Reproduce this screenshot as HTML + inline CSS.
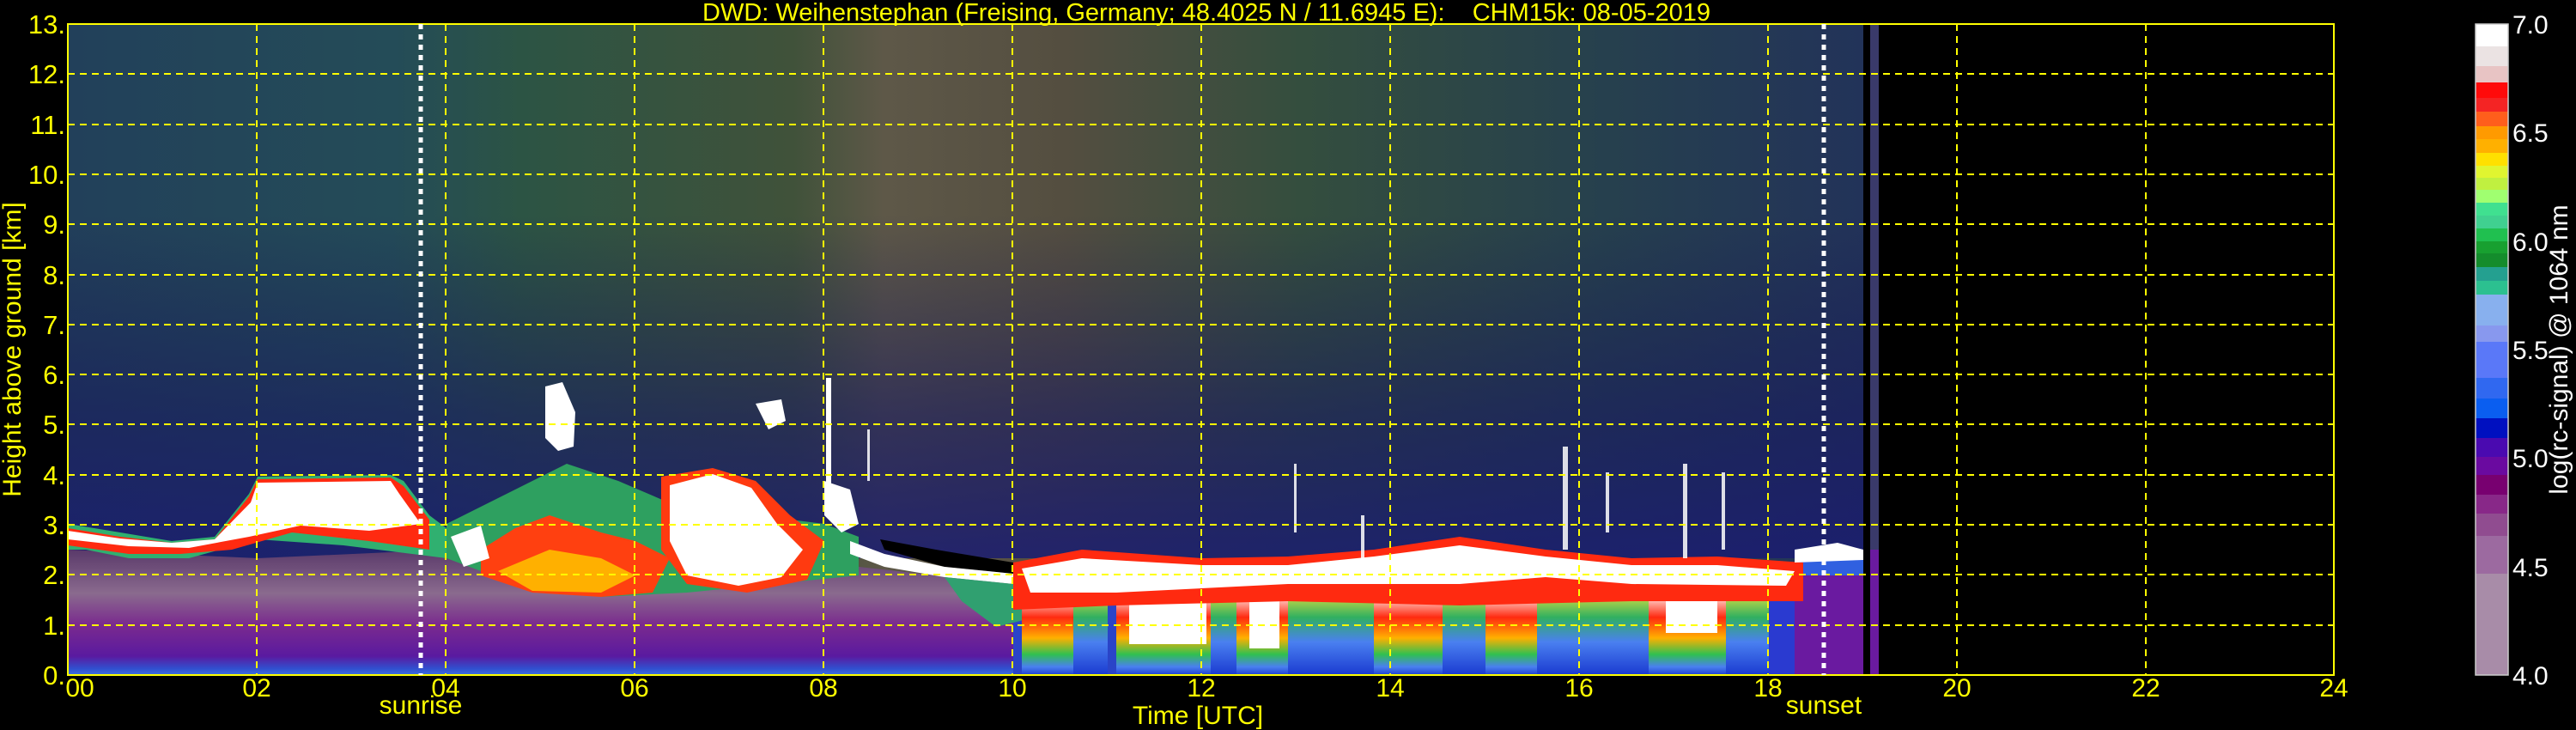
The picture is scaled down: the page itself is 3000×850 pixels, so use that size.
<!DOCTYPE html>
<html><head><meta charset="utf-8"><style>
html,body{margin:0;padding:0;background:#000;width:3000px;height:850px;overflow:hidden}
svg{display:block}
text{font-family:"Liberation Sans","DejaVu Sans",sans-serif}
</style></head><body>
<svg width="3000" height="850" viewBox="0 0 3000 850" xmlns="http://www.w3.org/2000/svg">
<defs>
<linearGradient id="hz" x1="79" x2="2190" y1="0" y2="0" gradientUnits="userSpaceOnUse">
<stop offset="0" stop-color="#22405a"/>
<stop offset="0.18" stop-color="#244c58"/>
<stop offset="0.25" stop-color="#2c5444"/>
<stop offset="0.4" stop-color="#40523a"/>
<stop offset="0.45" stop-color="#5e5848"/>
<stop offset="0.55" stop-color="#544e40"/>
<stop offset="0.68" stop-color="#344e3e"/>
<stop offset="0.85" stop-color="#26404e"/>
<stop offset="1" stop-color="#22325a"/>
</linearGradient>
<linearGradient id="vt" x1="0" x2="0" y1="250" y2="640" gradientUnits="userSpaceOnUse">
<stop offset="0" stop-color="#141450" stop-opacity="0"/>
<stop offset="0.6" stop-color="#181a60" stop-opacity="0.6"/>
<stop offset="1" stop-color="#1a1c70" stop-opacity="0.85"/>
</linearGradient>
<linearGradient id="low" x1="0" x2="0" y1="640" y2="786" gradientUnits="userSpaceOnUse">
<stop offset="0" stop-color="#5a3a6a"/>
<stop offset="0.35" stop-color="#8a6a8e"/>
<stop offset="0.6" stop-color="#7a2a8e"/>
<stop offset="0.85" stop-color="#5a1aa0"/>
<stop offset="0.95" stop-color="#3050d0"/>
<stop offset="1" stop-color="#4070e0"/>
</linearGradient>
<linearGradient id="col" x1="0" x2="0" y1="690" y2="786" gradientUnits="userSpaceOnUse">
<stop offset="0" stop-color="#ffffff"/>
<stop offset="0.3" stop-color="#ff2a10"/>
<stop offset="0.55" stop-color="#ffb000"/>
<stop offset="0.75" stop-color="#30c050"/>
<stop offset="0.9" stop-color="#4a80f0"/>
<stop offset="1" stop-color="#2040d0"/>
</linearGradient>
<linearGradient id="colb" x1="0" x2="0" y1="690" y2="786" gradientUnits="userSpaceOnUse">
<stop offset="0" stop-color="#e0e040"/>
<stop offset="0.3" stop-color="#30b060"/>
<stop offset="0.6" stop-color="#4a80f0"/>
<stop offset="1" stop-color="#1a3ad0"/>
</linearGradient>
</defs>

<rect x="79" y="28" width="2111" height="758" fill="url(#hz)"/>
<rect x="79" y="250" width="2111" height="400" fill="url(#vt)"/>

<polygon points="79,640 300,650 520,640 700,670 900,675 1000,660 1180,680 1180,786 79,786" fill="url(#low)"/>
<rect x="1180" y="700" width="1000" height="86" fill="#2a44c8"/>

<polygon points="79,610 140,620 200,630 250,625 290,575 300,555 455,553 470,560 500,600 520,615 520,650 480,645 400,635 300,628 220,650 150,650 100,640 79,640" fill="#30b070"/>
<polygon points="79,615 140,625 200,632 250,628 290,578 300,558 455,556 470,566 500,605 500,640 430,630 340,620 270,640 210,645 150,645 79,635" fill="#ff2a10"/>
<polygon points="79,618 140,627 200,632 250,628 292,585 300,562 455,560 465,575 490,610 430,618 350,612 290,625 220,638 150,636 79,628" fill="#ffffff"/>

<polygon points="520,610 560,590 620,560 660,540 720,560 790,590 880,600 960,610 1000,625 1000,670 900,680 800,690 700,695 600,680 520,650" fill="#2ea060"/>
<polygon points="560,640 600,615 640,600 700,620 740,630 780,650 760,690 700,695 620,690 560,670" fill="#ff4010"/>
<polygon points="580,665 640,640 700,650 740,670 700,690 620,688" fill="#ffb000"/>
<polygon points="770,555 830,545 880,560 920,600 960,630 940,675 870,690 800,680 770,640" fill="#ff3a10"/>
<polygon points="780,565 830,552 875,568 905,610 935,640 910,672 860,682 800,670 780,630" fill="#ffffff"/>
<polygon points="635,450 655,445 670,480 668,520 650,525 635,510" fill="#ffffff"/>
<polygon points="525,625 560,612 570,650 540,660" fill="#ffffff"/>
<polygon points="880,470 910,465 915,490 895,500" fill="#ffffff"/>
<rect x="962" y="440" width="6" height="140" fill="#ffffff"/>
<polygon points="960,560 990,570 1000,610 980,620 960,600" fill="#ffffff"/>

<polygon points="1025,628 1090,640 1180,655 1180,668 1100,660 1030,640" fill="#000"/>
<polygon points="990,630 1030,645 1100,660 1180,668 1180,680 1100,672 1030,660 990,645" fill="#ffffff"/>
<polygon points="1100,672 1180,680 1200,720 1160,730 1120,700" fill="#30a070"/>

<rect x="1190" y="690" width="60" height="96" fill="url(#col)"/>
<rect x="1250" y="690" width="40" height="96" fill="url(#colb)"/>
<rect x="1300" y="690" width="110" height="96" fill="url(#col)"/>
<rect x="1315" y="695" width="90" height="55" fill="#ffffff"/>
<rect x="1410" y="690" width="30" height="96" fill="url(#colb)"/>
<rect x="1440" y="690" width="60" height="96" fill="url(#col)"/>
<rect x="1455" y="695" width="35" height="60" fill="#ffffff"/>
<rect x="1500" y="690" width="100" height="96" fill="url(#colb)"/>
<rect x="1600" y="690" width="80" height="96" fill="url(#col)"/>
<rect x="1680" y="690" width="50" height="96" fill="url(#colb)"/>
<rect x="1730" y="690" width="60" height="96" fill="url(#col)"/>
<rect x="1790" y="690" width="40" height="96" fill="url(#colb)"/>
<rect x="1830" y="690" width="90" height="96" fill="url(#colb)"/>
<rect x="1920" y="690" width="90" height="96" fill="url(#col)"/>
<rect x="1940" y="692" width="60" height="45" fill="#ffffff"/>
<rect x="2010" y="690" width="50" height="96" fill="url(#colb)"/>
<rect x="2060" y="700" width="50" height="86" fill="#2a3ad0"/>
<rect x="2090" y="670" width="80" height="116" fill="#6a1aa0"/>
<rect x="2090" y="650" width="80" height="20" fill="#3060e0"/>

<polygon points="1180,655 1260,640 1400,650 1500,648 1600,640 1700,625 1800,640 1900,650 2000,648 2100,655 2100,700 1900,700 1700,705 1500,700 1300,705 1180,710" fill="#ff2a10"/>
<polygon points="1190,662 1260,650 1400,658 1500,658 1600,648 1700,635 1800,648 1900,658 2000,658 2090,665 2080,682 1900,680 1800,672 1700,680 1500,680 1300,690 1200,690" fill="#ffffff"/>
<polygon points="2090,640 2140,632 2170,640 2170,652 2090,655" fill="#ffffff"/>
<rect x="2178" y="640" width="10" height="146" fill="#6a1aa0"/>
<rect x="2178" y="28" width="10" height="612" fill="#3a3a6a"/>
<rect x="2170" y="28" width="8" height="758" fill="#000"/>
<g fill="#ffffff" opacity="0.85">
<rect x="1507" y="540" width="3" height="80"/><rect x="1585" y="600" width="4" height="60"/>
<rect x="1820" y="520" width="6" height="120"/><rect x="1960" y="540" width="5" height="110"/>
<rect x="1870" y="550" width="4" height="70"/><rect x="2005" y="550" width="4" height="90"/>
<rect x="1010" y="500" width="3" height="60"/>
</g>

<rect x="2188" y="28" width="531" height="758" fill="#000"/>

<g stroke="#ffff00" stroke-width="2" stroke-dasharray="8,6" fill="none">
<path d="M79 728H2718M79 669H2718M79 611H2718M79 553H2718M79 494H2718M79 436H2718M79 378H2718M79 320H2718M79 261H2718M79 203H2718M79 145H2718M79 86H2718"/>
<path d="M299 28V786M519 28V786M739 28V786M959 28V786M1179 28V786M1399 28V786M1619 28V786M1839 28V786M2059 28V786M2279 28V786M2499 28V786"/>
</g>
<rect x="79" y="28" width="2639" height="758" fill="none" stroke="#ffff00" stroke-width="2"/>
<path d="M490 28V786M2124 28V786" stroke="#fff" stroke-width="5" stroke-dasharray="6,6"/>

<text x="1405" y="24" font-size="29" fill="#ffff00" text-anchor="middle" xml:space="preserve">DWD: Weihenstephan (Freising, Germany; 48.4025 N / 11.6945 E):    CHM15k: 08-05-2019</text>

<g font-size="31" fill="#ffff00" text-anchor="end">
<text x="76" y="39">13.</text><text x="76" y="97">12.</text><text x="76" y="156">11.</text><text x="76" y="214">10.</text>
<text x="76" y="272">9.</text><text x="76" y="331">8.</text><text x="76" y="389">7.</text><text x="76" y="447">6.</text>
<text x="76" y="505">5.</text><text x="76" y="564">4.</text><text x="76" y="622">3.</text><text x="76" y="680">2.</text>
<text x="76" y="739">1.</text><text x="76" y="797">0.</text>
</g>
<text transform="translate(24,407) rotate(-90)" font-size="30" fill="#ffff00" text-anchor="middle">Height above ground [km]</text>

<g font-size="30" fill="#ffff00" text-anchor="middle">
<text x="93" y="811">00</text><text x="299" y="811">02</text><text x="519" y="811">04</text><text x="739" y="811">06</text>
<text x="959" y="811">08</text><text x="1179" y="811">10</text><text x="1399" y="811">12</text><text x="1619" y="811">14</text>
<text x="1839" y="811">16</text><text x="2059" y="811">18</text><text x="2279" y="811">20</text><text x="2499" y="811">22</text>
<text x="2718" y="811">24</text>
<text x="490" y="831">sunrise</text><text x="2124" y="831">sunset</text>
<text x="1395" y="843">Time [UTC]</text>
</g>

<g>
<rect x="2883" y="28" width="38" height="26" fill="#ffffff"/>
<rect x="2883" y="54" width="38" height="23" fill="#ebe3e3"/>
<rect x="2883" y="77" width="38" height="19" fill="#e8c4c4"/>
<rect x="2883" y="96" width="38" height="18" fill="#ff0a0a"/>
<rect x="2883" y="114" width="38" height="16" fill="#f42424"/>
<rect x="2883" y="130" width="38" height="17" fill="#ff5e1c"/>
<rect x="2883" y="147" width="38" height="15" fill="#ff9a00"/>
<rect x="2883" y="162" width="38" height="16" fill="#ffb000"/>
<rect x="2883" y="178" width="38" height="15" fill="#ffe000"/>
<rect x="2883" y="193" width="38" height="14" fill="#e0f530"/>
<rect x="2883" y="207" width="38" height="14" fill="#c0f040"/>
<rect x="2883" y="221" width="38" height="15" fill="#a0ff70"/>
<rect x="2883" y="236" width="38" height="15" fill="#40e090"/>
<rect x="2883" y="251" width="38" height="15" fill="#40d090"/>
<rect x="2883" y="266" width="38" height="15" fill="#20c050"/>
<rect x="2883" y="281" width="38" height="14" fill="#18a030"/>
<rect x="2883" y="295" width="38" height="16" fill="#148c2c"/>
<rect x="2883" y="311" width="38" height="16" fill="#24a090"/>
<rect x="2883" y="327" width="38" height="16" fill="#2cc090"/>
<rect x="2883" y="343" width="38" height="36" fill="#88b0ee"/>
<rect x="2883" y="379" width="38" height="19" fill="#8898ee"/>
<rect x="2883" y="398" width="38" height="42" fill="#5a78f8"/>
<rect x="2883" y="440" width="38" height="24" fill="#3068f0"/>
<rect x="2883" y="464" width="38" height="23" fill="#0a5ef0"/>
<rect x="2883" y="487" width="38" height="23" fill="#0010c0"/>
<rect x="2883" y="510" width="38" height="22" fill="#4a0ab0"/>
<rect x="2883" y="532" width="38" height="21" fill="#6a0aa0"/>
<rect x="2883" y="553" width="38" height="23" fill="#780070"/>
<rect x="2883" y="576" width="38" height="22" fill="#882888"/>
<rect x="2883" y="598" width="38" height="26" fill="#904c90"/>
<rect x="2883" y="624" width="38" height="44" fill="#9c6aa0"/>
<rect x="2883" y="668" width="38" height="118" fill="#a88ca8"/>
<rect x="2883" y="28" width="38" height="758" fill="none" stroke="#ccc" stroke-width="1.5"/>
</g>
<g font-size="30" fill="#ffffff">
<text x="2926" y="39">7.0</text><text x="2926" y="165">6.5</text><text x="2926" y="292">6.0</text>
<text x="2926" y="418">5.5</text><text x="2926" y="544">5.0</text><text x="2926" y="671">4.5</text><text x="2926" y="797">4.0</text>
</g>
<text transform="translate(2990,407) rotate(-90)" font-size="30" fill="#ffffff" text-anchor="middle">log(rc-signal) @ 1064 nm</text>
</svg>
</body></html>
